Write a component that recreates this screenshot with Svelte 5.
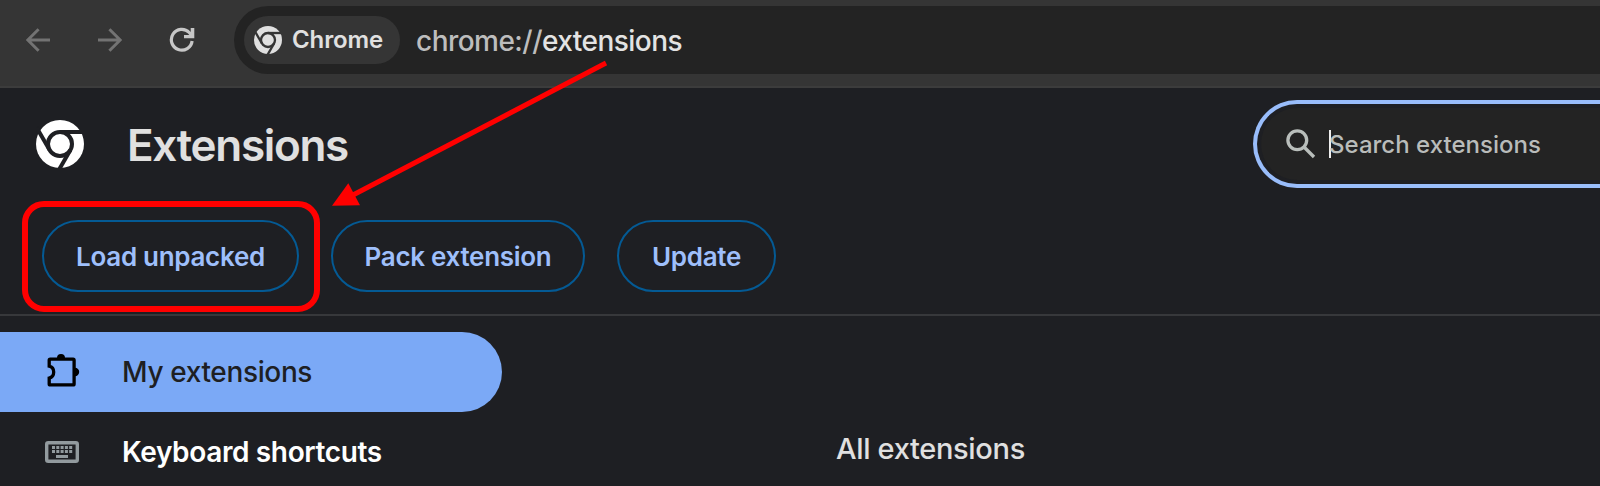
<script>
  const actions = [
    { label: 'Load unpacked', kind: 'load', marked: true },
    { label: 'Pack extension', kind: 'pack' },
    { label: 'Update', kind: 'update' }
  ];
  const keys = [0, 1, 2, 3, 4];
</script>

{#snippet logo(cls)}
  <svg class={cls} viewBox="-24 -24 48 48">
    <circle r="24" fill="currentColor" />
    <g class="cut">
      <circle r="12" />
      {#each [0, 120, 240] as angle}
        <path d="M0-12H26" transform="rotate({angle})" />
      {/each}
    </g>
  </svg>
{/snippet}

<div class="window">
  <div class="toolbar">
    <svg class="nav-icon back" viewBox="0 0 24 24"><path d="M24 12H2M12.6 1.2L1.8 12l10.8 10.8" /></svg>
    <svg class="nav-icon forward" viewBox="0 0 24 24"><path d="M0 12h22M11.4 1.2L22.2 12 11.4 22.8" /></svg>
    <svg class="reload" viewBox="0 0 26 26">
      <path class="ring" d="M23.1 14A10.4 10.4 0 1 1 20.2 5.5L22.8 8.4" />
      <path class="tip" d="M25.3 1v10.3H15V8h6.7V1z" />
    </svg>
    <div class="omnibox">
      <div class="chip">{@render logo('chip-logo')}<span>Chrome</span></div>
      <div class="url">chrome://<b>extensions</b></div>
    </div>
  </div>

  <header>
    {@render logo('page-logo')}
    <h1>Extensions</h1>
    <div class="search">
      <div class="field">
        <svg class="glass" viewBox="0 0 30 30"><circle cx="11.3" cy="11.3" r="9.4" /><path d="M18 18l10 10" /></svg>
        <i class="caret"></i>
        <span>Search extensions</span>
      </div>
    </div>
  </header>

  <div class="actions">
    {#each actions as action}
      <button class={action.kind}>
        <span>{action.label}</span>
        {#if action.marked}<i class="mark"></i>{/if}
      </button>
    {/each}
  </div>

  <div class="body">
    <nav>
      <div class="item selected">
        <svg class="puzzle" viewBox="0 0 36 36">
          <path class="line" d="M4.2 7.2Q4.2 6.2 5.2 6.2H28.1Q29.1 6.2 29.1 7.2V30.9Q29.1 31.9 28.1 31.9H5.2Q4.2 31.9 4.2 30.9V25.1C7.4 24.4 8.7 22 8.7 19.1C8.7 16.2 7.4 13.8 4.2 13.1Z" />
          <path class="solid" d="M12 5a4 4 0 0 1 8 0zM30 14.8a4.2 4.2 0 0 1 0 8.4z" />
        </svg>
        <span class="my">My extensions</span>
      </div>
      <div class="item">
        <svg class="keyboard" viewBox="0 0 34 22">
          <rect class="case" x="1.7" y="1.7" width="30.6" height="18.6" rx="1.6" />
          {#each [5, 9] as y}
            {#each keys as k}<rect x={7 + k * 4.3} {y} width="3" height="3" />{/each}
          {/each}
          <rect x="11" y="14" width="12" height="3" />
        </svg>
        <span class="kb">Keyboard shortcuts</span>
      </div>
    </nav>
    <main><h2>All extensions</h2></main>
  </div>

  <svg class="arrow" viewBox="0 0 1600 486">
    <path class="shaft" d="M606 63L353 195" />
    <path class="head" d="M332 205.7L348.3 183.3L360 205.3Z" />
  </svg>
</div>

<style>
  :global(body) { margin: 0; background: #1e1f23; }
  .window {
    position: relative;
    width: 1600px;
    height: 486px;
    overflow: hidden;
    background: #1e1f23;
    font-family: Inter, "Liberation Sans", sans-serif;
    color: #e0e0e0;
  }
  svg { display: block; flex: none; }
  span, .url, h1, h2 { white-space: nowrap; }
  .cut { fill: none; stroke: var(--behind); stroke-width: 4; }
  .toolbar {
    box-sizing: border-box;
    height: 88px;
    display: flex;
    align-items: flex-start;
    padding: 6px 0 0 26px;
    background: #353535;
    border-bottom: 2px solid #3c3c3c;
  }
  .nav-icon { width: 24px; height: 24px; margin-top: 22px; fill: none; stroke: #737373; stroke-width: 3; }
  .forward { margin-left: 48px; }
  .reload { width: 26px; height: 26px; margin: 21px 39px 0 47px; }
  .ring { fill: none; stroke: #c7c7c7; stroke-width: 3.2; }
  .tip { fill: #c7c7c7; }
  .omnibox {
    box-sizing: border-box;
    flex: 1;
    height: 68px;
    display: flex;
    align-items: center;
    padding-left: 10px;
    border-radius: 34px 0 0 34px;
    background: #232323;
  }
  .chip {
    --behind: #353535;
    box-sizing: border-box;
    width: 156px;
    height: 48px;
    display: flex;
    align-items: center;
    padding-left: 10px;
    gap: 10px;
    border-radius: 24px;
    background: #353535;
    font-size: 24px;
    font-weight: 580;
    letter-spacing: -0.1px;
  }
  .chip span { margin-top: -1px; }
  .chip-logo { width: 28px; height: 28px; }
  .url { margin: 1px 0 0 16px; font-size: 28px; font-weight: 450; color: #bdbdbd; letter-spacing: -0.53px; }
  .url b { font-weight: 450; color: #e3e3e3; }
  header {
    --behind: #1e1f23;
    height: 112px;
    display: flex;
    align-items: center;
    padding-left: 36px;
  }
  .page-logo { width: 48px; height: 48px; color: #fff; }
  h1 { margin: 2px 0 0 43px; font-size: 44px; line-height: 52px; font-weight: 560; letter-spacing: -1.3px; }
  .search {
    box-sizing: border-box;
    width: 360px;
    height: 88px;
    margin: 0 -13px 0 auto;
    padding: 4px;
    border: 4px solid #99bdfb;
    border-right: 0;
    border-radius: 44px 0 0 44px;
  }
  .field {
    height: 72px;
    display: flex;
    align-items: center;
    padding-left: 25px;
    border-radius: 36px 0 0 36px;
    background: #232323;
    color: #b9bcba;
    font-size: 24px;
    font-weight: 450;
    letter-spacing: 0.02px;
  }
  .glass { width: 30px; height: 30px; fill: none; stroke: #b9bebb; stroke-width: 3.3; }
  .caret { width: 2px; height: 28px; margin-left: 13px; background: #eee; }
  .field span { margin-left: -2px; }
  .actions {
    box-sizing: border-box;
    height: 116px;
    display: flex;
    gap: 32px;
    padding: 20px 0 0 42px;
    border-bottom: 2px solid #37383b;
  }
  button {
    position: relative;
    box-sizing: border-box;
    height: 72px;
    padding: 0;
    border: 2px solid #045a94;
    border-radius: 36px;
    background: transparent;
    color: #9ebffb;
    font: 580 26px Inter, "Liberation Sans", sans-serif;
    letter-spacing: -0.3px;
  }
  .load { width: 257px; }
  .pack { width: 254px; }
  .update { width: 159px; }
  .mark {
    position: absolute;
    box-sizing: border-box;
    inset: -21px -22.7px -21.7px -21.7px;
    border: 6px solid #ff0000;
    border-radius: 22px;
  }
  .body { display: flex; padding-top: 16px; }
  nav { width: 502px; }
  .item { box-sizing: border-box; height: 80px; display: flex; align-items: center; padding-left: 45px; font-size: 28px; }
  .selected { background: #7ba9f6; color: #1e1f23; border-radius: 0 40px 40px 0; }
  .puzzle { width: 36px; height: 36px; margin: 0 0 3px 0; }
  .line { fill: none; stroke: #000; stroke-width: 3.3; }
  .solid { fill: #000; }
  .keyboard { width: 34px; height: 22px; fill: #929a9e; }
  .case { fill: none; stroke: #929a9e; stroke-width: 3.4; }
  .my { margin: 0 0 0 41px; font-weight: 480; letter-spacing: -0.36px; }
  .kb { margin: 0 0 0 43px; color: #fff; font-weight: 580; letter-spacing: -0.36px; }
  main { padding: 99px 0 0 334px; }
  h2 { margin: 0; font-size: 29px; line-height: 36px; font-weight: 450; letter-spacing: -0.33px; }
  .arrow { position: absolute; inset: 0; width: 1600px; height: 486px; pointer-events: none; }
  .shaft { fill: none; stroke: #ff0000; stroke-width: 5; }
  .head { fill: #ff0000; }
</style>
